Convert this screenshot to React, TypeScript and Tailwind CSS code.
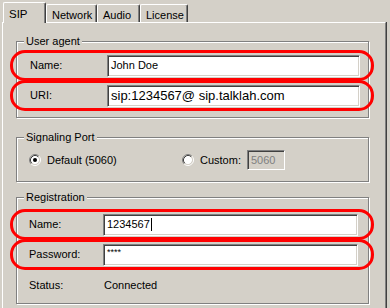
const BG = 'bg-[#d4d0c8]';

function Radio({ checked }: { checked?: boolean }) {
  return (
    <svg width="12" height="12" viewBox="0 0 12 12" className="shrink-0">
      <circle cx="6" cy="6" r="4.2" fill="#fff" />
      <path d="M2.11 9.89 A5.5 5.5 0 0 1 9.89 2.11" stroke="#808080" fill="none" />
      <path d="M9.89 2.11 A5.5 5.5 0 0 1 2.11 9.89" stroke="#fff" fill="none" />
      <path d="M2.82 9.18 A4.5 4.5 0 0 1 9.18 2.82" stroke="#404040" fill="none" />
      <path d="M9.18 2.82 A4.5 4.5 0 0 1 2.82 9.18" stroke="#d4d0c8" fill="none" />
      {checked && <circle cx="6" cy="6" r="2" fill="#000" />}
    </svg>
  );
}

function Field({ children, w, h = 22, disabled }: { children?: React.ReactNode; w: number; h?: number; disabled?: boolean }) {
  return (
    <div
      style={{ width: w, height: h }}
      className={`flex items-center pl-[3px] border border-t-[#808080] border-l-[#808080] border-b-white border-r-white shadow-[inset_1px_1px_0_#404040,inset_-1px_-1px_0_#d4d0c8] ${
        disabled ? 'bg-[#d4d0c8] text-[#808080]' : 'bg-white text-black'
      }`}
    >
      {children}
    </div>
  );
}

function Group({ label, h, children }: { label: string; h: number; children: React.ReactNode }) {
  return (
    <div
      style={{ height: h }}
      className="relative w-[353px] border border-[#808080] shadow-[inset_1px_1px_0_#fff,1px_1px_0_#fff]"
    >
      <span className={`absolute -top-[8px] left-[7px] px-[2px] leading-[14px] ${BG}`}>{label}</span>
      {children}
    </div>
  );
}

function Oval({ children, className = '' }: { children: React.ReactNode; className?: string }) {
  return (
    <div className={`relative z-10 -ml-[7px] w-[364px] h-[31px] flex items-center border-[3px] border-[#ff0000] rounded-[15px] ${className}`}>
      {children}
    </div>
  );
}

export default function App() {
  const tabs = [
    { name: 'Network', w: 51 },
    { name: 'Audio', w: 43 },
    { name: 'License', w: 48 },
  ];

  return (
    <div className={`w-[390px] h-[308px] overflow-hidden ${BG} pl-[2px] pt-[2px] font-['Liberation_Sans',Arial,sans-serif] text-[11px] text-black`}>
      {/* tab strip */}
      <div className="flex items-end h-[20px] pl-[1px]">
        <div className={`relative z-10 -mb-px h-[21px] w-[43px] ${BG} border-l border-t border-white border-r border-r-[#404040] shadow-[inset_-1px_0_0_#808080] rounded-t-[2px] pl-[5px] pt-[3px] text-[11.5px]`}>
          SIP
        </div>
        {tabs.map(t => (
          <div
            key={t.name}
            style={{ width: t.w }}
            className={`h-[18px] ${BG} border-l border-t border-white border-r border-r-[#404040] shadow-[inset_-1px_0_0_#808080] rounded-t-[2px] pl-[5px] pt-[2px]`}
          >
            {t.name}
          </div>
        ))}
      </div>

      {/* panel */}
      <div className="w-[384px] h-[290px] border-l border-t border-white border-r border-r-[#808080] shadow-[1px_0_0_#404040] pl-[13px] pt-[18px]">
        <Group label="User agent" h={77}>
          <div className="pt-[8px]">
            <Oval>
              <span className="w-[77px] pl-[17px] box-content">Name:</span>
              <Field w={253}>
                <span className="text-[11px]">John Doe</span>
              </Field>
            </Oval>
            <Oval className="-mt-[1px]">
              <span className="w-[77px] pl-[17px] box-content">URI:</span>
              <Field w={253}>
                <span className="text-[13px]">sip:1234567@ sip.talklah.com</span>
              </Field>
            </Oval>
          </div>
        </Group>

        <div className="mt-[19px]">
          <Group label="Signaling Port" h={45}>
            <div className="flex items-center h-full pl-[12px] pt-[1px]">
              <div className="flex items-center gap-[6px] w-[153px]">
                <Radio checked />
                <span>Default (5060)</span>
              </div>
              <div className="flex items-center gap-[6px] w-[65px]">
                <Radio />
                <span>Custom:</span>
              </div>
              <Field w={38} h={20} disabled>
                <span>5060</span>
              </Field>
            </div>
          </Group>
        </div>

        <div className="mt-[15px]">
          <Group label="Registration" h={107}>
            <div className="pt-[11px]">
              <Oval>
                <span className="w-[74px] pl-[16px] box-content">Name:</span>
                <Field w={255}>
                  <span>1234567</span>
                  <span className="ml-px w-px h-[13px] bg-black" />
                </Field>
              </Oval>
              <Oval className="-mt-[1px]">
                <span className="w-[74px] pl-[16px] box-content">Password:</span>
                <Field w={255}>
                  <span className="self-start pt-[3px] text-[9px] leading-none">****</span>
                </Field>
              </Oval>
              <div className="flex items-center h-[14px] mt-[8px] pl-[12px]">
                <span className="w-[75px]">Status:</span>
                <span>Connected</span>
              </div>
            </div>
          </Group>
        </div>
      </div>
    </div>
  );
}
